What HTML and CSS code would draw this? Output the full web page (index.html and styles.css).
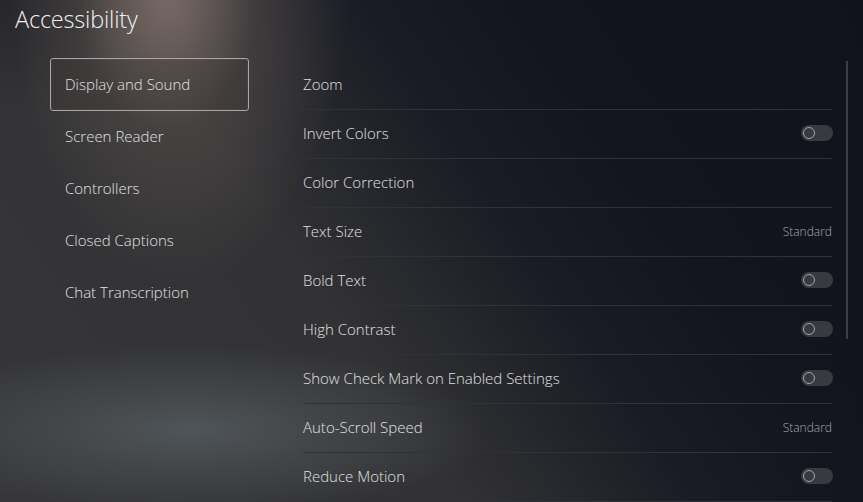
FILE: index.html
```html
<!DOCTYPE html>
<html lang="en">
<head>
<meta charset="utf-8">
<title>Accessibility</title>
<link rel="stylesheet" href="styles.css">
</head>
<body>
<div class="screen">
  <h1 class="title">Accessibility</h1>
  <div class="content">
    <nav class="nav">
      <div class="nav-item selected">Display and Sound</div>
      <div class="nav-item">Screen Reader</div>
      <div class="nav-item">Controllers</div>
      <div class="nav-item">Closed Captions</div>
      <div class="nav-item">Chat Transcription</div>
    </nav>
    <section class="list">
      <div class="row"><span class="label">Zoom</span></div>
      <div class="row"><span class="label">Invert Colors</span><span class="toggle"><span class="knob"></span></span></div>
      <div class="row"><span class="label">Color Correction</span></div>
      <div class="row"><span class="label">Text Size</span><span class="value">Standard</span></div>
      <div class="row"><span class="label">Bold Text</span><span class="toggle"><span class="knob"></span></span></div>
      <div class="row"><span class="label">High Contrast</span><span class="toggle"><span class="knob"></span></span></div>
      <div class="row"><span class="label">Show Check Mark on Enabled Settings</span><span class="toggle"><span class="knob"></span></span></div>
      <div class="row"><span class="label">Auto-Scroll Speed</span><span class="value">Standard</span></div>
      <div class="row"><span class="label">Reduce Motion</span><span class="toggle"><span class="knob"></span></span></div>
    </section>
    <div class="scroll"><div class="thumb"></div></div>
  </div>
</div>
</body>
</html>
```
FILE: styles.css
```css
html, body {
  margin: 0;
  padding: 0;
  height: 100%;
}
body {
  overflow: hidden;
  font-family: "Open Sans", "Noto Sans", sans-serif;
  color: #e2e2e4;
  background-color: #12141d;
}
.screen {
  width: 863px;
  height: 502px;
  overflow: hidden;
  background:
    radial-gradient(ellipse 90px 130px at 165px 0px, rgba(160,140,132,0.45), rgba(160,140,132,0) 100%),
    radial-gradient(ellipse 170px 300px at 180px -20px, rgba(120,106,100,0.55), rgba(120,106,100,0) 100%),
    radial-gradient(ellipse 300px 85px at 190px 430px, rgba(82,88,92,0.9), rgba(82,88,92,0) 100%),
    radial-gradient(ellipse 140px 110px at 0px 0px, rgba(30,30,34,0.55), rgba(30,30,34,0) 100%),
    linear-gradient(56deg, #363638 0%, #323234 38%, #27282d 48%, #1a1c25 58%, #13151e 72%, #11131c 100%);
}
.title {
  margin: 0;
  padding: 3px 0 0 15px;
  height: 40px;
  box-sizing: border-box;
  font-size: 23.5px;
  font-weight: 300;
  line-height: 32px;
  color: #f0f0f0;
  letter-spacing: -0.2px;
}
.content {
  display: flex;
  padding-top: 18px;
}
.nav {
  margin-left: 50px;
  width: 199px;
  display: flex;
  flex-direction: column;
}
.nav-item {
  height: 52px;
  box-sizing: border-box;
  padding-left: 14px;
  padding-bottom: 1px;
  display: flex;
  align-items: center;
  font-size: 15px;
  font-weight: 300;
  color: #e0e0e2;
  border: 1px solid transparent;
  border-radius: 3px;
}
.nav-item.selected {
  height: 53px;
  border-color: #a9a4a6;
  background: rgba(60,52,50,0.3);
  box-shadow: inset 0 0 0 1px rgba(255,255,255,0.04);
}
.nav-item.selected + .nav-item { margin-top: -1px; }
.list {
  margin-left: 54px;
  margin-top: 3px;
  width: 529px;
  display: flex;
  flex-direction: column;
}
.row {
  height: 49px;
  box-sizing: border-box;
  padding-bottom: 2px;
  border-bottom: 1px solid #30323a;
  display: flex;
  align-items: center;
  justify-content: space-between;
}
.label {
  font-size: 15px;
  font-weight: 300;
  color: #e0e0e2;
}
.value {
  font-size: 12px;
  font-weight: 300;
  color: #a9a9ad;
}
.toggle {
  width: 32px;
  height: 16px;
  border-radius: 8px;
  background: #393a40;
  display: flex;
  align-items: center;
  padding-left: 2px;
  box-sizing: border-box;
  margin-right: -1px;
}
.knob {
  width: 12px;
  height: 12px;
  box-sizing: border-box;
  border-radius: 50%;
  border: 1.5px solid #a3a3a8;
}
.scroll {
  margin-left: 14px;
  margin-top: 3px;
  width: 2px;
}
.thumb {
  width: 2px;
  height: 278px;
  background: #3b3e4a;
}
```
